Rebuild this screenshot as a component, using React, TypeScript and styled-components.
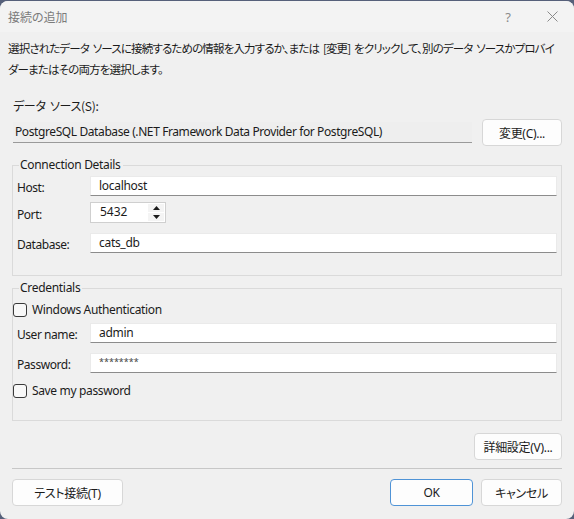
import React from "react";
import styled, { createGlobalStyle } from "styled-components";

const Global = createGlobalStyle`
  html, body { margin: 0; padding: 0; background: #56607a; }
  body {
    font-family: "Noto Sans", "Noto Sans CJK JP", sans-serif;
    font-size: 12px;
    color: #1b1b1b;
    font-feature-settings: "palt";
  }
  * { box-sizing: border-box; }
`;

const Window = styled.div`
  margin-top: 1px;
  width: 574px;
  height: 518px;
  background: #f0f0f0;
  border-radius: 8px;
  overflow: hidden;
  display: flex;
  flex-direction: column;
`;

const TitleBar = styled.div`
  height: 31px;
  background: #f3f3f3;
  display: flex;
  align-items: center;
  padding-left: 8px;
  color: #7b7b7b;
  font-size: 12px;
`;

const Title = styled.span`
  flex: 1;
  font-family: "Noto Sans CJK JP", sans-serif;
`;

const TitleButton = styled.div`
  width: 44px;
  height: 30px;
  display: flex;
  align-items: center;
  justify-content: center;
  color: #8a8a8a;
  font-size: 13px;
`;

const Body = styled.div`
  flex: 1;
  display: flex;
  flex-direction: column;
  padding: 0 12px 0 12px;
`;

const Intro = styled.p`
  margin: 6px 0 0 -4px;
  line-height: 21px;
  font-family: "Noto Sans CJK JP", sans-serif;
  font-size: 11.5px;
  letter-spacing: -0.85px;
  word-spacing: 2px;
  white-space: nowrap;
`;

const SourceLabel = styled.div`
  margin: 17px 0 0 1px;
  font-family: "Noto Sans CJK JP", sans-serif;
  letter-spacing: -0.3px;
  word-spacing: 2px;
`;

const SourceRow = styled.div`
  display: flex;
  align-items: center;
  gap: 10px;
  margin-top: 5px;
  padding-left: 1px;
`;

const SourceField = styled.div`
  width: 459px;
  height: 21px;
  border-bottom: 1px solid #9a9a9a;
  background: #eeeeee;
  padding-left: 2px;
  line-height: 20px;
  white-space: nowrap;
  letter-spacing: -0.4px;
`;

const Button = styled.button<{ $w: number; $primary?: boolean }>`
  width: ${(p) => p.$w}px;
  height: 27px;
  background: #fdfdfd;
  border: 1px solid ${(p) => (p.$primary ? "#4f93d6" : "#d7d7d7")};
  border-radius: 4px;
  font-family: "Noto Sans", "Noto Sans CJK JP", sans-serif;
  font-feature-settings: "palt";
  font-size: 12px;
  color: #1b1b1b;
  padding: 0;
  letter-spacing: -0.3px;
`;

const Group = styled.fieldset<{ $h: number; $top: number }>`
  margin: ${(p) => p.$top}px 0 0 0;
  height: ${(p) => p.$h}px;
  border: 1px solid #dadada;
  padding: 0 4px 0 4px;
  display: flex;
  flex-direction: column;
`;

const Legend = styled.legend`
  padding: 0 2px 0 1px;
  margin-left: 2px;
  font-size: 12px;
  line-height: 14px;
  letter-spacing: -0.3px;
`;

const FieldRow = styled.div<{ $top: number }>`
  display: flex;
  align-items: center;
  margin-top: ${(p) => p.$top}px;
`;

const Label = styled.span`
  width: 73px;
  padding-top: 4px;
  letter-spacing: -0.45px;
`;

const TextBox = styled.div`
  flex: 1;
  height: 20px;
  background: #ffffff;
  border: 1px solid #eaeaea;
  border-bottom-color: #8c8c8c;
  padding-left: 8px;
  line-height: 17px;
  letter-spacing: -0.3px;
`;

const Masked = styled(TextBox)`
  font-size: 9px;
  line-height: 16px;
  letter-spacing: 0;
  color: #444;
`;

const Spinner = styled.div`
  width: 76px;
  height: 21px;
  background: #ffffff;
  border: 1px solid #cfcfcf;
  display: flex;
`;

const SpinValue = styled.div`
  flex: 1;
  padding-left: 9px;
  line-height: 18px;
`;

const SpinButtons = styled.div`
  width: 17px;
  display: flex;
  flex-direction: column;
  gap: 1px;
  padding: 1px 1px 1px 0;
`;

const SpinButton = styled.div`
  flex: 1;
  background: #f4f4f4;
  display: flex;
  align-items: center;
  justify-content: center;
`;

const CheckRow = styled.label<{ $top: number }>`
  display: flex;
  align-items: center;
  gap: 5px;
  margin: ${(p) => p.$top}px 0 0 -4px;
  letter-spacing: -0.35px;
  font-size: 12px;
`;

const Box = styled.span`
  width: 14px;
  height: 14px;
  border: 1px solid #3a3a3a;
  border-radius: 3px;
  background: #f8f8f8;
`;

const RightRow = styled.div`
  display: flex;
  justify-content: flex-end;
  margin-top: 12px;
`;

const Separator = styled.div`
  height: 1px;
  background: #c7c7c7;
  margin-top: 8px;
`;

const Footer = styled.div`
  display: flex;
  align-items: center;
  gap: 8px;
  margin-top: 10px;
`;

const Spacer = styled.div`
  flex: 1;
`;

const Tri = ({ up }: { up?: boolean }) => (
  <svg width="7" height="4" viewBox="0 0 7 4">
    <path d={up ? "M0 4 L3.5 0 L7 4 Z" : "M0 0 L3.5 4 L7 0 Z"} fill="#1b1b1b" />
  </svg>
);

export default function App() {
  return (
    <>
      <Global />
      <Window>
        <TitleBar>
          <Title>接続の追加</Title>
          <TitleButton>?</TitleButton>
          <TitleButton>
            <svg width="11" height="11" viewBox="0 0 11 11">
              <path d="M0.5 0.5 L10.5 10.5 M10.5 0.5 L0.5 10.5" stroke="#8a8a8a" strokeWidth="1" />
            </svg>
          </TitleButton>
        </TitleBar>
        <Body>
          <Intro>
            選択されたデータ ソースに接続するための情報を入力するか、または [変更] をクリックして、別のデータ ソースかプロバイ
            <br />
            ダーまたはその両方を選択します。
          </Intro>
          <SourceLabel>データ ソース(S):</SourceLabel>
          <SourceRow>
            <SourceField>PostgreSQL Database (.NET Framework Data Provider for PostgreSQL)</SourceField>
            <Button $w={80}>変更(C)...</Button>
          </SourceRow>

          <Group $h={118} $top={12}>
            <Legend>Connection Details</Legend>
            <FieldRow $top={3}>
              <Label>Host:</Label>
              <TextBox>localhost</TextBox>
            </FieldRow>
            <FieldRow $top={6}>
              <Label>Port:</Label>
              <Spinner>
                <SpinValue>5432</SpinValue>
                <SpinButtons>
                  <SpinButton><Tri up /></SpinButton>
                  <SpinButton><Tri /></SpinButton>
                </SpinButtons>
              </Spinner>
            </FieldRow>
            <FieldRow $top={9}>
              <Label>Database:</Label>
              <TextBox>cats_db</TextBox>
            </FieldRow>
          </Group>

          <Group $h={140} $top={5}>
            <Legend>Credentials</Legend>
            <CheckRow $top={6}>
              <Box />
              Windows Authentication
            </CheckRow>
            <FieldRow $top={4}>
              <Label>User name:</Label>
              <TextBox>admin</TextBox>
            </FieldRow>
            <FieldRow $top={9}>
              <Label>Password:</Label>
              <Masked>********</Masked>
            </FieldRow>
            <CheckRow $top={9}>
              <Box />
              Save my password
            </CheckRow>
          </Group>

          <RightRow>
            <Button $w={88}>詳細設定(V)...</Button>
          </RightRow>
          <Separator />
          <Footer>
            <Button $w={111}>テスト接続(T)</Button>
            <Spacer />
            <Button $w={83} $primary>OK</Button>
            <Button $w={81}>キャンセル</Button>
          </Footer>
        </Body>
      </Window>
    </>
  );
}
